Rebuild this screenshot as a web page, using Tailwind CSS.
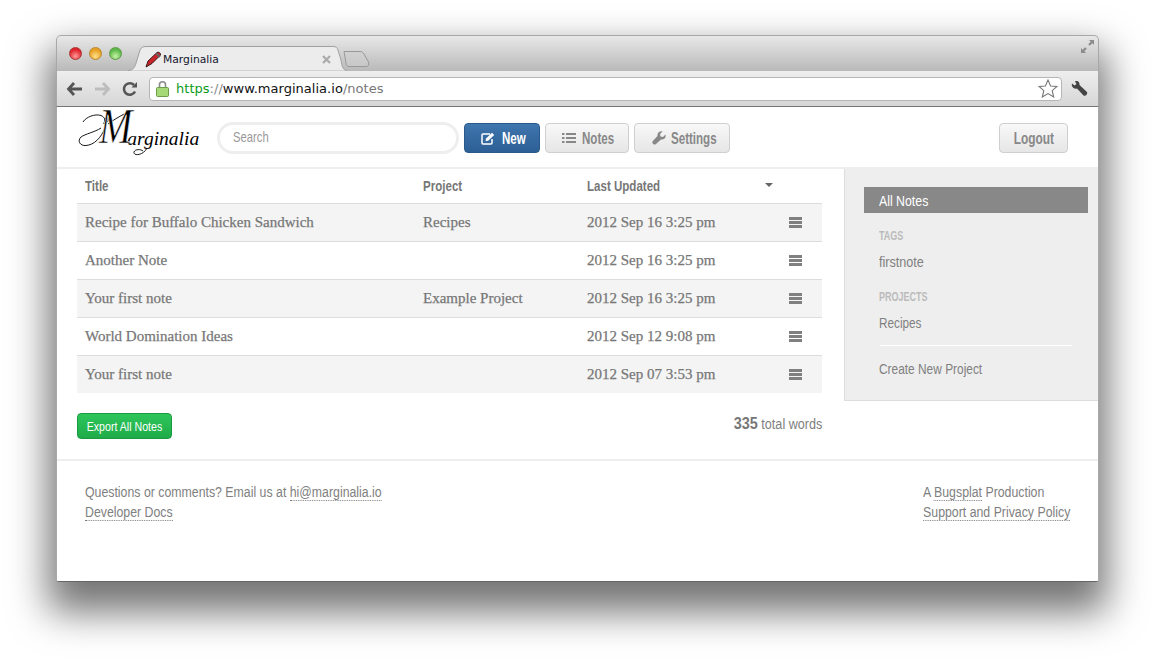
<!DOCTYPE html>
<html lang="en">
<head>
  <meta charset="UTF-8">
  <title>Marginalia</title>
  <meta name="viewport" content="width=device-width, initial-scale=1.0" />
  <script src="https://cdn.jsdelivr.net/npm/@tailwindcss/browser@4"></script>
</head>
<body class="bg-white h-screen overflow-hidden pt-[35px] pl-[56px] font-['Liberation_Sans',sans-serif]">
  <div class="w-[1043px] h-[547px] bg-white rounded-t-[5px] rounded-b-[3px] border-b border-[#666] shadow-[0_22px_38px_8px_rgba(0,0,0,0.55)]">

    <!-- title bar -->
    <div class="relative flex items-end h-[36px] rounded-t-[5px] bg-gradient-to-b from-[#e8e8e8] to-[#b9b9b9] border-t border-x border-[#a8a8a8]">
      <div class="flex items-center gap-[7px] self-start mt-[11px] ml-[12px]">
        <span class="w-[13px] h-[13px] rounded-full border border-[#a33] bg-[radial-gradient(circle_at_50%_75%,#ff9a9a,#e0252c_65%)]"></span>
        <span class="w-[13px] h-[13px] rounded-full border border-[#b8862b] bg-[radial-gradient(circle_at_50%_75%,#ffe08a,#e8a023_65%)]"></span>
        <span class="w-[13px] h-[13px] rounded-full border border-[#5f9a45] bg-[radial-gradient(circle_at_50%_75%,#c6f5a5,#5cb84a_65%)]"></span>
      </div>
      <div class="relative w-[219px] h-[25px] ml-[6px] shrink-0">
        <svg class="absolute inset-0" width="219" height="25" viewBox="0 0 219 25">
          <path d="M0 24.500 C6 24 7 21 9 14 L12 4 C13 1.500 15 .5 18 .5 L205 .5 C208 .5 209 1.500 210 4 L213 14 C214 21 215 24 219 24.500" fill="#ececec" stroke="#a0a0a0"/>
        </svg>
        <svg class="absolute left-[17px] top-[5px]" width="17" height="17" viewBox="0 0 17 17">
          <path d="M1 16 L3 10 L12 1.500 C13.500 .5 16 2 15.500 4 L7 12.500 Z" fill="#c8252b" stroke="#2a1012" stroke-width=".9"/>
          <path d="M11 2.500 L15 6" stroke="#666" stroke-width="1.800"/>
        </svg>
        <span class="absolute left-[35px] top-[6px] text-[10.750px] leading-[16px] text-[#14142e] font-['DejaVu_Sans',sans-serif]">Marginalia</span>
        <svg class="absolute left-[194px] top-[9px]" width="9" height="9" viewBox="0 0 9 9"><path d="M1 1 L8 8 M8 1 L1 8" stroke="#aaa" stroke-width="2.200"/></svg>
      </div>
      <svg class="ml-[-4px] mb-[4px]" width="27" height="16" viewBox="0 0 27 16">
        <path d="M1 .5 L17 .5 C19 .5 20 1.500 21 3 L25.500 11 C26.500 14 25 15.500 23 15.500 L6 15.500 C4 15.500 3.500 14 3 12 Z" fill="#d0d0d0" fill-opacity=".5" stroke="#999"/>
      </svg>
      <svg class="absolute right-[3px] top-[3px]" width="15" height="15" viewBox="0 0 15 15">
        <path d="M9 1 H14 V6 L12.300 4.300 L9.800 6.800 L8.200 5.200 L10.700 2.700 Z M6 14 H1 V9 L2.700 10.700 L5.200 8.200 L6.800 9.800 L4.300 12.300 Z" fill="#8c8c8c"/>
      </svg>
    </div>

    <!-- toolbar -->
    <div class="flex items-center h-[36px] bg-gradient-to-b from-[#eeeeee] to-[#d6d6d6] border-x border-b border-x-[#a8a8a8] border-b-[#777]">
      <div class="flex items-center gap-[9px] w-[92px] pl-[9px]">
        <svg width="18" height="16" viewBox="0 0 18 16"><path d="M8 2 L2.500 8 L8 14 M3 8 H16" fill="none" stroke="#555" stroke-width="2.800"/></svg>
        <svg width="18" height="16" viewBox="0 0 18 16"><path d="M10 2 L15.500 8 L10 14 M15 8 H2" fill="none" stroke="#bdbdbd" stroke-width="2.800"/></svg>
        <svg class="ml-[2px]" width="16" height="16" viewBox="0 0 16 16"><path d="M13 10.500 A5.800 5.800 0 1 1 12 4" fill="none" stroke="#555" stroke-width="2.600"/><path d="M9.500 6.500 H15 V1 Z" fill="#555"/></svg>
      </div>
      <div class="flex items-center w-[913px] h-[24px] bg-white rounded-[4px] border border-[#b5b5b5] pl-[6px] pr-[3px] text-[13px] tracking-[0.03px] font-['DejaVu_Sans',sans-serif]">
        <svg class="mr-[7px] shrink-0" width="13" height="17" viewBox="0 0 13 17"><path d="M3.500 8 V4.500 C3.500 .8 9.500 .8 9.500 4.500 V8" fill="none" stroke="#8a8a8a" stroke-width="1.600"/><rect x=".5" y="7.500" width="12" height="9" rx="1" fill="#a5d877" stroke="#6f9c4a"/></svg>
        <span class="text-[#0a9b1a]">https</span><span class="text-[#888]">://</span><span class="text-[#111]">www.marginalia.io</span><span class="text-[#777]">/notes</span>
        <svg class="ml-auto" width="20" height="19" viewBox="0 0 20 19"><path d="M10 1 L12.600 7 L19 7.500 L14.200 11.700 L15.700 18 L10 14.600 L4.300 18 L5.800 11.700 L1 7.500 L7.400 7 Z" fill="#fff" stroke="#777" stroke-width="1.100"/></svg>
      </div>
      <svg class="ml-[9px]" width="17" height="17" viewBox="0 0 17 17"><path d="M1 3.500 L3.500 5.500 L5.500 4 L4 1.500 C6.500 0 9 2 8.500 5 L16 12 C17 14 14.500 16.500 12.500 15.500 L6 8.500 C3 9.500 0 6.500 1 3.500 Z" fill="#444"/></svg>
    </div>

    <div class="border-x border-[#a8a8a8] h-[474px] flex flex-col">
      <!-- header -->
      <div class="flex items-start h-[62px] border-b-2 border-[#eeeeee] pl-[20px] pr-[30px]">
        <div class="relative w-[122px] h-[46px] mt-[5px] shrink-0 text-black">
          <svg class="absolute left-0 top-0" width="122" height="46" viewBox="0 0 122 46">
            <path d="M24 16 C18 20 8 22 4 25 C0 29 3 34 9 33.500 C17 33 24 26 28 16 C30 10 28 5 24 3.500 C18 1.500 9 5 6 10 M28 10 C26 6 30 4 31 7 C32 10 28 12 26 11 M31 12 C36 8 42 5 47 2 M70 36 C66 44 56 44 57 40 C58 37 64 37 66 39" fill="none" stroke="#000" stroke-width=".9"/>
          </svg>
          <div class="absolute left-[22px] top-0 flex items-baseline italic font-['Liberation_Serif',serif]">
            <span class="inline-block origin-bottom scale-y-[1.25] text-[40px] leading-[40px] [-webkit-text-stroke:0.5px_#fff]">M</span><span class="text-[19.500px] leading-[40px] ml-[-5px]">arginalia</span>
          </div>
        </div>
        <div class="flex items-center w-[242px] h-[32px] mt-[15px] ml-[18px] rounded-full border-[3px] border-[#eeeeee] pl-[13px] text-[15px] text-[#999]"><span class="inline-block mb-[2px] origin-left scale-x-[.75]">Search</span></div>
        <a class="flex items-center gap-[7px] w-[76px] h-[30px] mt-[16px] ml-[5px] pl-[16px] rounded-[4px] border border-[#2a5a8c] bg-gradient-to-b from-[#3f76ad] to-[#2c5f95] text-white text-[17px] font-bold">
          <svg class="shrink-0" width="14" height="13" viewBox="0 0 14 13"><path d="M9 2 H2 A1 1 0 0 0 1 3 V11 A1 1 0 0 0 2 12 H10 A1 1 0 0 0 11 11 V7" fill="none" stroke="#fff" stroke-width="1.500"/><path d="M5 6.500 L11 .8 L13.200 3 L7.200 8.800 L4.600 9.200 Z" fill="#fff"/></svg><span class="inline-block mt-[2px] origin-left scale-x-[.68]">New</span></a>
        <a class="flex items-center gap-[6px] w-[84px] h-[30px] mt-[16px] ml-[5px] pl-[16px] rounded-[4px] border border-[#cfcfcf] bg-gradient-to-b from-[#f8f8f8] to-[#e6e6e6] text-[#888] text-[17px] font-bold">
          <svg class="shrink-0" width="14" height="12" viewBox="0 0 14 12"><path d="M0 1 H2.500 V3 H0 Z M4 1 H14 V3 H4 Z M0 5 H2.500 V7 H0 Z M4 5 H14 V7 H4 Z M0 9 H2.500 V11 H0 Z M4 9 H14 V11 H4 Z" fill="#888"/></svg><span class="inline-block mt-[2px] origin-left scale-x-[.68]">Notes</span></a>
        <a class="flex items-center gap-[5px] w-[96px] h-[30px] mt-[16px] ml-[5px] pl-[17px] rounded-[4px] border border-[#cfcfcf] bg-gradient-to-b from-[#f8f8f8] to-[#e6e6e6] text-[#888] text-[17px] font-bold">
          <svg class="shrink-0" width="14" height="14" viewBox="0 0 14 14"><path d="M13.500 3.500 L11 6 L8.500 5.500 L8 3 L10.500 .5 C8 -.2 5 1.500 5.500 5 L.8 10 C0 11 .5 12.500 1.500 13.200 C2.500 13.800 3.500 13.500 4 13 L9 8.500 C12 9 14.500 6.500 13.500 3.500 Z" fill="#888"/></svg><span class="inline-block mt-[2px] origin-left scale-x-[.68]">Settings</span></a>
        <a class="flex items-center justify-center w-[69px] h-[30px] mt-[16px] ml-auto rounded-[4px] border border-[#cfcfcf] bg-gradient-to-b from-[#f8f8f8] to-[#e6e6e6] text-[#888] text-[17px] font-bold"><span class="inline-block mt-[2px] scale-x-[.7]">Logout</span></a>
      </div>

      <!-- main -->
      <div class="flex items-start h-[292px] border-b-2 border-[#eeeeee]">
        <div class="w-[745px] ml-[20px] shrink-0">
          <div class="flex items-center h-[35px] border-b border-[#dddddd] pl-[8px] text-[15px] font-bold text-[#777]">
            <span class="w-[338px]"><span class="inline-block origin-left scale-x-[.77]">Title</span></span><span class="w-[164px]"><span class="inline-block origin-left scale-x-[.77]">Project</span></span><span class="w-[178px]"><span class="inline-block origin-left scale-x-[.77]">Last Updated</span></span>
            <span class="w-0 h-0 mb-[3px] border-x-[4px] border-t-[4px] border-x-transparent border-t-[#666]"></span>
          </div>
          <div class="flex items-center h-[38px] pb-[1px] bg-[#f4f4f4] border-b border-[#dddddd] pl-[8px] text-[15px] text-[#777] [-webkit-text-stroke:0.25px_#777] font-['Liberation_Serif',serif]">
            <span class="w-[338px]">Recipe for Buffalo Chicken Sandwich</span><span class="w-[164px]">Recipes</span><span class="w-[202px]">2012 Sep 16 3:25 pm</span>
            <span class="flex flex-col gap-[1px] w-[13px]"><i class="h-[3px] bg-[#808080]"></i><i class="h-[3px] bg-[#808080]"></i><i class="h-[3px] bg-[#808080]"></i></span>
          </div>
          <div class="flex items-center h-[38px] pb-[1px] border-b border-[#dddddd] pl-[8px] text-[15px] text-[#777] [-webkit-text-stroke:0.25px_#777] font-['Liberation_Serif',serif]">
            <span class="w-[338px]">Another Note</span><span class="w-[164px]"></span><span class="w-[202px]">2012 Sep 16 3:25 pm</span>
            <span class="flex flex-col gap-[1px] w-[13px]"><i class="h-[3px] bg-[#808080]"></i><i class="h-[3px] bg-[#808080]"></i><i class="h-[3px] bg-[#808080]"></i></span>
          </div>
          <div class="flex items-center h-[38px] pb-[1px] bg-[#f4f4f4] border-b border-[#dddddd] pl-[8px] text-[15px] text-[#777] [-webkit-text-stroke:0.25px_#777] font-['Liberation_Serif',serif]">
            <span class="w-[338px]">Your first note</span><span class="w-[164px]">Example Project</span><span class="w-[202px]">2012 Sep 16 3:25 pm</span>
            <span class="flex flex-col gap-[1px] w-[13px]"><i class="h-[3px] bg-[#808080]"></i><i class="h-[3px] bg-[#808080]"></i><i class="h-[3px] bg-[#808080]"></i></span>
          </div>
          <div class="flex items-center h-[38px] pb-[1px] border-b border-[#dddddd] pl-[8px] text-[15px] text-[#777] [-webkit-text-stroke:0.25px_#777] font-['Liberation_Serif',serif]">
            <span class="w-[338px]">World Domination Ideas</span><span class="w-[164px]"></span><span class="w-[202px]">2012 Sep 12 9:08 pm</span>
            <span class="flex flex-col gap-[1px] w-[13px]"><i class="h-[3px] bg-[#808080]"></i><i class="h-[3px] bg-[#808080]"></i><i class="h-[3px] bg-[#808080]"></i></span>
          </div>
          <div class="flex items-center h-[37px] bg-[#f4f4f4] pl-[8px] text-[15px] text-[#777] [-webkit-text-stroke:0.25px_#777] font-['Liberation_Serif',serif]">
            <span class="w-[338px]">Your first note</span><span class="w-[164px]"></span><span class="w-[202px]">2012 Sep 07 3:53 pm</span>
            <span class="flex flex-col gap-[1px] w-[13px]"><i class="h-[3px] bg-[#808080]"></i><i class="h-[3px] bg-[#808080]"></i><i class="h-[3px] bg-[#808080]"></i></span>
          </div>
          <div class="flex items-start justify-between mt-[20px]">
            <a class="flex items-center justify-center w-[95px] h-[26px] rounded-[4px] border border-[#1c9a42] bg-gradient-to-b from-[#2dc65b] to-[#1fab49] text-white text-[12.500px]"><span class="inline-block mt-[2px] scale-x-[.85]">Export All Notes</span></a>
            <span class="inline-block origin-right scale-x-[.9] text-[14px] leading-[22px] text-[#808080]"><b class="text-[16px] text-[#777]">335</b> total words</span>
          </div>
        </div>
        <!-- sidebar -->
        <div class="w-[254px] h-[232px] ml-[22px] bg-[#eeeeee] border-l border-b border-[#dddddd] pt-[18px] pl-[19px] pr-[10px] text-[14px] text-[#808080]">
          <div class="flex items-center h-[26px] pl-[15px] bg-[#888888] text-white"><span class="inline-block mt-[2px] origin-left scale-x-[.88]">All Notes</span></div>
          <div class="pl-[15px] mt-[16px] text-[12px] leading-[14px] font-bold text-[#bbbbbb]"><span class="inline-block origin-left scale-x-[.75]">TAGS</span></div>
          <div class="pl-[15px] mt-[10px] leading-[18px]"><span class="inline-block origin-left scale-x-[.9]">firstnote</span></div>
          <div class="pl-[15px] mt-[19px] text-[12px] leading-[14px] font-bold text-[#bbbbbb]"><span class="inline-block origin-left scale-x-[.75]">PROJECTS</span></div>
          <div class="pl-[15px] mt-[10px] leading-[18px]"><span class="inline-block origin-left scale-x-[.84]">Recipes</span></div>
          <div class="mx-[16px] mt-[13px] h-px bg-white"></div>
          <div class="pl-[15px] mt-[14px] leading-[18px]"><span class="inline-block origin-left scale-x-[.85]">Create New Project</span></div>
        </div>
      </div>

      <!-- footer -->
      <div class="flex justify-between pt-[21px] pl-[28px] pr-[28px] text-[14px] leading-[20px] text-[#808080]">
        <div class="origin-left scale-x-[.88]">
          <div>Questions or comments? Email us at <a class="border-b border-dotted border-[#777]">hi@marginalia.io</a></div>
          <div><a class="border-b border-dotted border-[#777]">Developer Docs</a></div>
        </div>
        <div class="origin-right scale-x-[.88]">
          <div>A <a class="border-b border-dotted border-[#777]">Bugsplat</a> Production</div>
          <div><a class="border-b border-dotted border-[#777]">Support and Privacy Policy</a></div>
        </div>
      </div>
    </div>
  </div>
</body>
</html>
